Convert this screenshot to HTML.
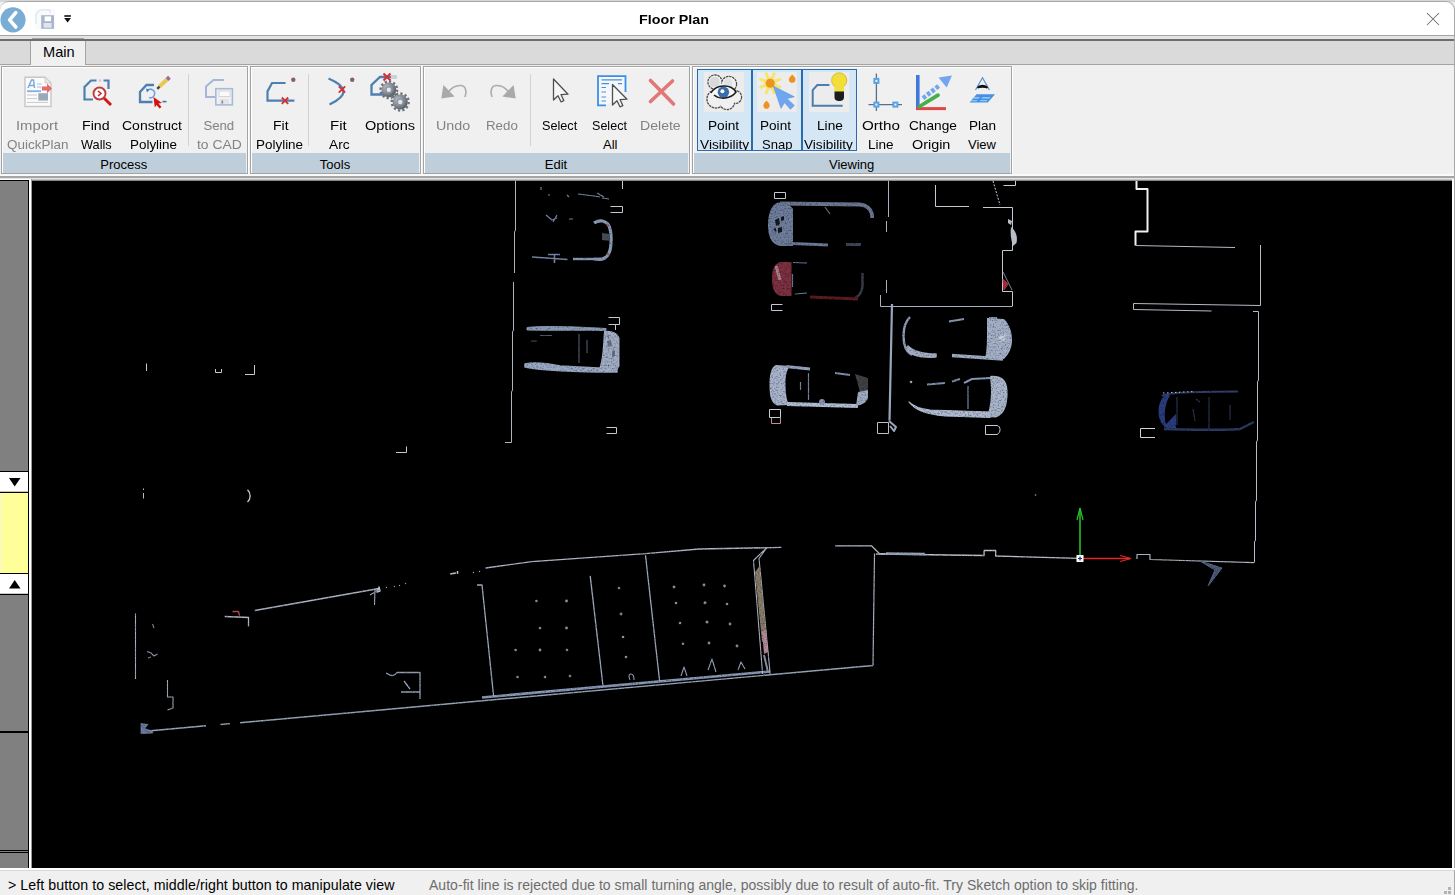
<!DOCTYPE html>
<html><head><meta charset="utf-8"><style>
*{box-sizing:border-box}
html,body{margin:0;padding:0;width:1455px;height:895px;overflow:hidden;background:#f0f0f0;font-family:"Liberation Sans",sans-serif;font-size:13px;color:#000}
.a{position:absolute}
.t{position:absolute;white-space:nowrap;line-height:1;font-size:13px;transform-origin:0 0}
.dis{color:#838383}
.grp{position:absolute;top:66px;height:108px;border:1px solid #a3a3a3;background:#f0f0f0;box-shadow:inset 1px 1px 0 #fff}
.grp:after{content:"";position:absolute;right:-2px;top:-1px;bottom:-2px;width:1px;background:#fff}
.lbar{position:absolute;left:1px;right:1px;bottom:0;height:20px;background:#bfcedb}
.c{width:100px;text-align:center}
.sep{position:absolute;top:74px;width:1px;height:72px;background:#d0d0d0}
</style></head><body>
<!-- window top border -->
<div class="a" style="left:0;top:0;width:1455px;height:2px;background:#d6d6d6"></div>
<div class="a" style="left:0;top:1px;width:1455px;height:35px;background:#fff;border-top:1px solid #a8a8a8;border-right:1px solid #a8a8a8;border-radius:9px 9px 0 0"></div>
<div class="a" style="left:0;top:35px;width:1455px;height:1px;background:#a5a5a5"></div>
<div class="a" style="left:0;top:36px;width:1455px;height:3px;background:#e3e3e3"></div>
<div class="a" style="left:0;top:39px;width:1455px;height:2px;background:#6e6e6e"></div>
<div class="a" style="left:32px;top:38px;width:52px;height:1px;background:#a0a0a0"></div>
<!-- tab strip -->
<div class="a" style="left:0;top:41px;width:1455px;height:23px;background:#dadada"></div>
<div class="a" style="left:0;top:64px;width:1455px;height:1px;background:#a3a3a3"></div>
<div class="a" style="left:30px;top:41px;width:56px;height:24px;background:#f0f0f0;border-left:1px solid #a3a3a3;border-right:1px solid #a3a3a3"></div>
<div class="t" style="left:43px;top:44.5px;font-size:14.6px">Main</div>
<div class="a" style="left:0;top:65px;width:1455px;height:110px;background:#f0f0f0"></div>

<!-- title -->
<div class="t" style="left:639.2px;top:13px;font-weight:bold;font-size:13.7px;transform:scaleX(1.045)">Floor Plan</div>

<!-- ribbon groups -->
<div class="grp" style="left:1px;width:247px"><div class="lbar"></div></div>
<div class="grp" style="left:250px;width:171px"><div class="lbar"></div></div>
<div class="grp" style="left:423px;width:267px"><div class="lbar"></div></div>
<div class="grp" style="left:692px;width:320px"><div class="lbar"></div></div>

<!-- RIBBON -->
<svg class="a" style="left:0;top:0" width="1455" height="180" viewBox="0 0 1455 180">
<!-- title bar icons -->
<circle cx="13" cy="19.8" r="12.6" fill="#79add3"/>
<path d="M15.8,12.6 L9.6,19.8 L15.8,27" fill="none" stroke="#fff" stroke-width="3.6" stroke-linecap="round" stroke-linejoin="round"/>
<path d="M36,24 V14 L40.5,9.8 H50 V13" fill="none" stroke="#c9d3e8" stroke-width="1.3"/>
<rect x="35" y="9" width="20" height="20" fill="#f4f6fa" opacity="0.5"/>
<rect x="41.2" y="15.2" width="12.8" height="13.6" fill="#a9b5cd"/>
<rect x="44.6" y="16.4" width="6.4" height="4.8" fill="#fff"/>
<rect x="43.6" y="23" width="8" height="4.6" fill="#dfe4ee"/>
<rect x="64.3" y="15.2" width="6.6" height="1.6" fill="#111"/>
<path d="M64.2,18 H71 L67.6,22.6 Z" fill="#111"/>
<!-- Close X -->
<path d="M1427,13 L1439,25 M1439,13 L1427,25" stroke="#6c6c6c" stroke-width="1.05"/>

<!-- Import QuickPlan -->
<path d="M25,77.2 H45 L51,83 V106.5 H25 Z" fill="#fbfbfb" stroke="#c6c6c6" stroke-width="1.4"/>
<path d="M45,77.5 V83 H50.5" fill="#e8e8e8" stroke="#cfcfcf" stroke-width="1"/>
<path d="M28,88 L31.5,80 H33.5 L34.5,88 M29.3,85.5 H34" fill="none" stroke="#7ea9db" stroke-width="1.5"/>
<path d="M37,84 H41.5 M37,87 H41.5" stroke="#9cc0e6" stroke-width="1"/>
<rect x="27" y="90.3" width="14" height="1.8" fill="#85b0dd"/>
<path d="M27,95 H37 M27,98.6 H37 M27,102.4 H48" stroke="#c9c9c9" stroke-width="1"/>
<rect x="38.3" y="93.2" width="9.7" height="7.4" fill="#9aaabb"/>
<path d="M42,86.5 H47 V83.6 L52,88.4 L47,93.2 V90.5 H42 Z" fill="#e56a6a"/>

<!-- Find Walls -->
<path d="M96.5,80.5 H91 L84.5,87 V99.5 H93 M103.5,80.5 H108.5 V89" fill="none" stroke="#4b80b1" stroke-width="2.2"/>
<circle cx="100" cy="80.6" r="1.3" fill="#dcc0e8"/>
<circle cx="99.5" cy="93.5" r="6" fill="#fafafa" stroke="#c23a3a" stroke-width="1.9"/>
<path d="M104.2,98.3 L111,105" stroke="#d41616" stroke-width="3"/>
<path d="M98,91 L101,93.5 L98,96" fill="none" stroke="#c82222" stroke-width="1.5"/>

<!-- Construct Polyline -->
<path d="M154,85 H146.5 L140,92 V102 H152.5" fill="none" stroke="#4b80b1" stroke-width="2.3"/>
<path d="M147.5,90.5 A4.2,4.2 0 1 1 149,97.5" fill="none" stroke="#6aa6e8" stroke-width="1.6"/>
<path d="M146,88.5 L149.5,89.5 L147,92.5 Z" fill="#3a78d0"/>
<path d="M153.5,97 L162,103 L158.5,103.6 L161.5,107 L159.6,108.4 L156.5,105 L154.8,107.5 Z" fill="#d61010"/>
<path d="M162.5,101.6 H166.5" stroke="#4a70a0" stroke-width="1.6"/>
<path d="M159.5,86.5 L167,79.5" stroke="#e8c850" stroke-width="4"/>
<path d="M157.3,88.8 L159.5,86.5" stroke="#444" stroke-width="2.5"/>
<path d="M167,79.5 L169.5,77.3" stroke="#9a6a9a" stroke-width="4"/>

<!-- Send to CAD -->
<path d="M224,80 H213.5 L206,86.5 V97 H216" fill="none" stroke="#a4b7d9" stroke-width="2"/>
<rect x="215.8" y="88.7" width="16.6" height="16.2" fill="#eef0f4" stroke="#a9b9d8" stroke-width="1.6"/>
<rect x="219" y="91" width="11" height="5.5" fill="#fafafa" stroke="#cfcfcf" stroke-width="0.8"/>
<rect x="220" y="99" width="9" height="5" fill="#e4e4e4"/>
<rect x="221.5" y="100.5" width="1.6" height="3" fill="#888"/>

<!-- separator Process -->
<rect x="188" y="74" width="1" height="72" fill="#d2d2d2"/>

<!-- Fit Polyline -->
<path d="M285.6,83 H272 L267.5,91.4 V100.7 H294.4" fill="none" stroke="#4b80b1" stroke-width="2.2"/>
<path d="M281.8,97.5 L288.2,103.9 M288.2,97.5 L281.8,103.9" stroke="#d23434" stroke-width="1.9"/>
<circle cx="293.3" cy="79.7" r="2.2" fill="#8a5c72"/>
<rect x="308" y="74" width="1" height="72" fill="#d2d2d2"/>

<!-- Fit Arc -->
<path d="M328.5,78.5 Q358,91 329.5,104.5" fill="none" stroke="#4b80b1" stroke-width="2.2"/>
<path d="M338.8,86.3 L345.2,92.7 M345.2,86.3 L338.8,92.7" stroke="#d23434" stroke-width="1.9"/>
<circle cx="352.2" cy="79.8" r="2.2" fill="#8a5c72"/>

<!-- Options -->
<path d="M396.5,77 H380 L371.5,85 V94.5 H386" fill="none" stroke="#4b80b1" stroke-width="2.3"/>
<rect x="391" y="75.5" width="6" height="3" fill="#cfcfcf"/>
<defs><radialGradient id="gg" cx="0.35" cy="0.35" r="0.75"><stop offset="0" stop-color="#b8bec6"/><stop offset="0.6" stop-color="#7a828c"/><stop offset="1" stop-color="#4c545e"/></radialGradient></defs>
<g fill="url(#gg)"><circle cx="388.8" cy="89.8" r="7.4"/><circle cx="400.2" cy="102" r="7.6"/></g>
<g fill="none" stroke="#6a727c" stroke-width="2.4"><circle cx="388.8" cy="89.8" r="8.3" stroke-dasharray="2.17 2.17"/><circle cx="400.2" cy="102" r="8.5" stroke-dasharray="2.22 2.22"/></g>
<circle cx="388.8" cy="89.8" r="3.6" fill="#8e959e"/><circle cx="388.8" cy="89.8" r="2.2" fill="#e4e6e8"/>
<circle cx="400.2" cy="102" r="3.6" fill="#8e959e"/><circle cx="400.2" cy="102" r="2.2" fill="#e4e6e8"/>
<path d="M383.5,73.5 L390.5,80.5 M390.5,73.5 L383.5,80.5" stroke="#d23030" stroke-width="2"/>

<!-- Undo / Redo -->
<path d="M443.4,85 L441.3,98.6 L454.6,96.4 Z" fill="#a9a9a9"/>
<path d="M448.5,92 C452,87 457,85.2 461,85.5 C466,86 467,92 465,97" fill="none" stroke="#ababab" stroke-width="1.6"/>
<path d="M513.6,85 L515.7,98.6 L502.4,96.4 Z" fill="#a9a9a9"/>
<path d="M508.5,92 C505,87 500,85.2 496,85.5 C491,86 490,92 492,97" fill="none" stroke="#ababab" stroke-width="1.6"/>
<rect x="530" y="74" width="1" height="72" fill="#d2d2d2"/>

<!-- Select -->
<path d="M553.5,79 V100 L558,95.8 L561,101.8 L563.8,100.6 L561,94.6 L568,94.2 Z" fill="#f7f7f7" stroke="#505050" stroke-width="1.3" stroke-linejoin="round"/>
<!-- Select All -->
<path d="M606,105.3 H598 V76.2 H625.5 V92" fill="#f4f8fc" stroke="#3a8fe3" stroke-width="1.8"/>
<path d="M601.5,79.8 H622 M601.5,83.6 H609 M618,83.6 H622 M601.5,87.5 H606 M601.5,92 H606 M601.5,97 H606 M601.5,101 H606" stroke="#4a90d8" stroke-width="1.2"/>
<path d="M612.5,84.5 V105 L617,100.8 L620,106.8 L622.8,105.6 L620,99.6 L627,99.2 Z" fill="#f7f7f7" stroke="#505050" stroke-width="1.3" stroke-linejoin="round"/>
<!-- Delete -->
<path d="M650.5,80.5 L673.5,104 M672.5,81 L650.5,101.5" stroke="#e27777" stroke-width="3.6" stroke-linecap="round"/>

<!-- Viewing checked buttons -->
<rect x="697.5" y="69.5" width="54" height="81" fill="#d5e6f5" stroke="#2a6aad" stroke-width="1"/>
<rect x="752.5" y="69.5" width="49" height="81" fill="#d5e6f5" stroke="#2a6aad" stroke-width="1"/>
<rect x="802.5" y="69.5" width="54" height="81" fill="#d5e6f5" stroke="#2a6aad" stroke-width="1"/>
<path d="M698,70.5 H751 M753,70.5 H801 M803,70.5 H856" stroke="#c2ecfa" stroke-width="1"/>
<rect x="704" y="72" width="40" height="40" fill="#ececec"/>
<rect x="757" y="72" width="40" height="40" fill="#ececec"/>
<rect x="809" y="72" width="40" height="40" fill="#ececec"/>
<!-- Point visibility icon -->
<g fill="#f0f0f0" stroke="#4e4e4e" stroke-width="1.4" stroke-dasharray="2.5 0.7">
<circle cx="715" cy="82" r="7"/><circle cx="729" cy="84" r="7.5"/><circle cx="735" cy="97" r="6.5"/><circle cx="716" cy="99" r="9"/><circle cx="727" cy="102" r="7.5"/>
</g>
<g fill="#f0f0f0"><circle cx="715" cy="82" r="6.3"/><circle cx="729" cy="84" r="6.8"/><circle cx="735" cy="97" r="5.8"/><circle cx="716" cy="99" r="8.3"/><circle cx="727" cy="102" r="6.8"/><circle cx="724" cy="92" r="9"/></g>
<circle cx="714.5" cy="82" r="5.2" fill="#d8d9da"/><circle cx="728" cy="83" r="4.5" fill="#e0e1e2"/>
<path d="M711,93 C716,84 731,83.5 736,92 C732,98 725,100 714,96" fill="#f6f8fa" stroke="none"/>
<circle cx="723.4" cy="92.2" r="5.7" fill="#3a6db0"/>
<circle cx="722.4" cy="91.2" r="2" fill="#fff"/>
<path d="M711,93 C716,84 731,83.5 736,92 C731,99 720,100 714,95" fill="none" stroke="#1c1c1c" stroke-width="1.5"/>
<!-- Point snap icon -->
<path d="M775.3,85.4 L779.7,87.2 M772.3,88.4 L774.1,92.8 M768.1,88.4 L766.3,92.8 M765.1,85.4 L760.7,87.2 M765.1,81.2 L760.7,79.4 M768.1,78.2 L766.3,73.8 M772.3,78.2 L774.1,73.8 M775.3,81.2 L779.7,79.4" stroke="#f7e46a" stroke-width="3" stroke-linecap="round"/>
<circle cx="770.2" cy="83.3" r="6" fill="#f7e46a"/>
<circle cx="770.2" cy="83.3" r="4.5" fill="#ec9322"/>
<path d="M773.4,86.2 L794.3,96.8 L786.8,98.6 L794.3,105.4 L790.4,109.3 L784.5,102.6 L781,108.3 Z" fill="#6ea6f2" stroke="#5a90d8" stroke-width="0.6"/>
<path d="M792.2,74.5 C795,77 795.8,78.5 795.5,80 C795.2,82 793.8,82.8 792.2,82.8 C790.6,82.8 789,82 788.9,80 C788.8,78.5 789.6,77 792.2,74.5 Z" fill="#ec9322"/>
<path d="M766.5,100.8 C769,103 769.8,104.5 769.6,106 C769.3,108 767.9,108.8 766.5,108.8 C765,108.8 763.6,108 763.4,106 C763.3,104.5 764,103 766.5,100.8 Z" fill="#ec9322"/>
<!-- Line visibility icon -->
<path d="M829.4,85 H817.3 L812.7,90.2 V105.8 H842.7" fill="none" stroke="#4b7db0" stroke-width="2"/>
<circle cx="839.2" cy="80.4" r="7.6" fill="#f2de38" stroke="#d8b020" stroke-width="0.8"/>
<rect x="834.5" y="86" width="9.5" height="6" fill="#f2de38"/>
<path d="M834.5,91.5 H844 V97 C844,100 842,101 839.2,101 C836.5,101 834.5,100 834.5,97 Z" fill="#1c1c1c"/>
<!-- Ortho Line -->
<path d="M876.4,73.5 V111 M868.5,104.6 H902" stroke="#56718c" stroke-width="1.3"/>
<g fill="#5aa2e2"><rect x="873.4" y="77.9" width="6" height="6"/><rect x="873.4" y="101.6" width="6" height="6"/><rect x="892.4" y="101.6" width="6" height="6"/></g>
<g fill="#eaf4fc"><rect x="875.4" y="79.9" width="2" height="2"/><rect x="875.4" y="103.6" width="2" height="2"/><rect x="894.4" y="103.6" width="2" height="2"/></g>
<!-- Change origin -->
<path d="M917.8,75 V108.5" stroke="#3f78dc" stroke-width="3.6"/>
<path d="M916,108.6 H946" stroke="#e04848" stroke-width="3"/>
<path d="M919.5,106.5 L938,95.2" stroke="#46b046" stroke-width="3.8" stroke-linecap="round"/>
<path d="M923,98.2 L940,85" stroke="#72a6ee" stroke-width="4.6" stroke-dasharray="3.6 1.8"/>
<path d="M938.5,77.5 L952,75.5 L946.7,87.6 Z" fill="#72a6ee"/>
<!-- Plan view -->
<path d="M975.5,90 L982.5,77.8 L989.4,90" fill="none" stroke="#5a90d8" stroke-width="1.2"/>
<path d="M977.5,87.8 C979.5,84.8 985.5,84.8 987.5,87.8 C985.5,86.6 979.5,86.6 977.5,87.8 Z" fill="#111" stroke="#111" stroke-width="1.6"/>
<path d="M969.6,102.5 L976.5,94.2 H995 L987.8,102.5 Z" fill="#4a8ee6"/>
<path d="M973.5,97.2 H979.8 L978.5,98.6 H972.4 Z M982.5,97.2 H990.5 L989.3,98.6 H981.3 Z M971.5,100.2 H977.5 L976.6,101.3 H970.7 Z M980.6,100.2 H987.6 L986.7,101.3 H979.7 Z" fill="#9fdcf8"/>
</svg>
<div class="t dis" style="left:16.36px;top:119px;transform:scaleX(1.142)">Import</div>
<div class="t dis" style="left:7.46px;top:138px;transform:scaleX(1.036)">QuickPlan</div>
<div class="t" style="left:82.31px;top:119px;transform:scaleX(1.091)">Find</div>
<div class="t" style="left:80.60px;top:138px;transform:scaleX(0.981)">Walls</div>
<div class="t" style="left:122.32px;top:119px;transform:scaleX(1.078)">Construct</div>
<div class="t" style="left:129.57px;top:138px;transform:scaleX(1.032)">Polyline</div>
<div class="t dis" style="left:203.50px;top:119px;transform:scaleX(1.000)">Send</div>
<div class="t dis" style="left:196.80px;top:138px;transform:scaleX(1.068)">to CAD</div>
<div class="t" style="left:272.52px;top:119px;transform:scaleX(1.077)">Fit</div>
<div class="t" style="left:256.47px;top:138px;transform:scaleX(1.034)">Polyline</div>
<div class="t" style="left:329.85px;top:119px;transform:scaleX(1.154)">Fit</div>
<div class="t" style="left:329.00px;top:138px;transform:scaleX(1.053)">Arc</div>
<div class="t" style="left:365.38px;top:119px;transform:scaleX(1.116)">Options</div>
<div class="t dis" style="left:435.70px;top:119px;transform:scaleX(1.100)">Undo</div>
<div class="t dis" style="left:485.88px;top:119px;transform:scaleX(1.023)">Redo</div>
<div class="t" style="left:542.43px;top:119px;transform:scaleX(0.974)">Select</div>
<div class="t" style="left:592.43px;top:119px;transform:scaleX(0.966)">Select</div>
<div class="t" style="left:603.00px;top:138px;transform:scaleX(1.000)">All</div>
<div class="t dis" style="left:639.92px;top:119px;transform:scaleX(1.083)">Delete</div>
<div class="t" style="left:708.45px;top:119px;transform:scaleX(1.052)">Point</div>
<div class="t" style="left:760.26px;top:119px;transform:scaleX(1.045)">Point</div>
<div class="t" style="left:816.55px;top:119px;transform:scaleX(1.052)">Line</div>
<div class="t" style="left:862.13px;top:119px;transform:scaleX(1.168)">Ortho</div>
<div class="t" style="left:868.46px;top:138px;transform:scaleX(1.043)">Line</div>
<div class="t" style="left:908.55px;top:119px;transform:scaleX(1.050)">Change</div>
<div class="t" style="left:912.39px;top:138px;transform:scaleX(1.106)">Origin</div>
<div class="t" style="left:968.96px;top:119px;transform:scaleX(1.042)">Plan</div>
<div class="t" style="left:968.00px;top:138px;transform:scaleX(1.000)">View</div>
<div class="t c" style="left:73.8px;top:158px">Process</div>
<div class="t c" style="left:285px;top:158px">Tools</div>
<div class="t c" style="left:506px;top:158px">Edit</div>
<div class="t c" style="left:801.7px;top:158px">Viewing</div>
<div class="a" style="left:697px;top:130px;width:160px;height:20px;overflow:hidden"><div class="t" style="left:2.50px;top:8px;transform:scaleX(1.053)">Visibility</div><div class="t" style="left:64.50px;top:8px;transform:scaleX(1.003)">Snap</div><div class="t" style="left:107.40px;top:8px;transform:scaleX(1.047)">Visibility</div></div>
<!-- /RIBBON -->
<!-- lower ribbon border -->
<div class="a" style="left:0;top:174px;width:1455px;height:2px;background:#fafafa"></div>
<div class="a" style="left:0;top:176px;width:1455px;height:2px;background:#a6a6a6"></div>
<div class="a" style="left:0;top:178px;width:1455px;height:1px;background:#e4e4e4"></div>

<!-- left strip -->
<div class="a" style="left:0;top:179px;width:31px;height:691px;background:#fff"></div>
<div class="a" style="left:0;top:180px;width:29px;height:689px;background:#000"></div>
<div class="a" style="left:0;top:181px;width:28px;height:687px;background:#808080"></div>

<!-- left strip scroll -->
<div class="a" style="left:0;top:471px;width:28px;height:1px;background:#000"></div>
<div class="a" style="left:0;top:472px;width:28px;height:20px;background:#fff;border-bottom:1px solid #c8c0b0"></div>
<div class="a" style="left:0;top:492px;width:28px;height:1px;background:#000"></div>
<div class="a" style="left:0;top:493px;width:28px;height:80px;background:#ffff99;box-shadow:inset 1px 0 0 #f6f6e0"></div>
<div class="a" style="left:0;top:573px;width:28px;height:1px;background:#000"></div>
<div class="a" style="left:0;top:574px;width:28px;height:20px;background:#fff;border-bottom:1px solid #c8c8c8"></div>
<div class="a" style="left:0;top:594px;width:28px;height:1px;background:#000"></div>
<div class="a" style="left:0;top:731px;width:28px;height:2px;background:#000"></div>
<div class="a" style="left:0;top:850px;width:28px;height:1px;background:#000"></div>
<div class="a" style="left:0;top:852px;width:28px;height:1px;background:#000"></div>
<svg class="a" style="left:0;top:470px" width="28" height="130"><path d="M9,8 H20.5 L14.7,16.5 Z" fill="#000"/><path d="M9,118.5 H20.5 L14.7,110 Z" fill="#000"/></svg>

<!-- canvas -->
<div class="a" style="left:31px;top:179px;width:1424px;height:2px;background:linear-gradient(#e4e4e4,#6a6a6a)"></div>
<div class="a" style="left:31px;top:179px;width:1px;height:689px;background:#9a9a9a"></div>
<div class="a" style="left:32px;top:181px;width:1420px;height:687px;background:#000"></div>
<div class="a" style="left:1452px;top:179px;width:2px;height:691px;background:#fff"></div>
<div class="a" style="left:1454px;top:36px;width:1px;height:859px;background:#a8a8a8"></div>

<!-- PLAN -->
<svg class="a" style="left:0;top:0" width="1455" height="895" viewBox="0 0 1455 895">
<defs><clipPath id="cv"><rect x="32" y="181" width="1420" height="687"/></clipPath>
<filter id="nz" x="0" y="0" width="1455" height="895" filterUnits="userSpaceOnUse"><feTurbulence type="fractalNoise" baseFrequency="0.6" numOctaves="2" seed="7" result="n"/><feColorMatrix in="n" type="matrix" values="1.7 0 0 0 0.05  1.7 0 0 0 0.05  1.7 0 0 0 0.05  0 0 0 0 1" result="m"/><feComposite in="SourceGraphic" in2="m" operator="arithmetic" k1="1" k2="0" k3="0" k4="0"/></filter>
</defs>
<g clip-path="url(#cv)" fill="none" stroke-linejoin="round" stroke-linecap="butt">
<!-- ===== crisp walls ===== -->
<g stroke-width="1">
<path d="M515.5,181 V230 L514.5,232 V273 M513.5,282 V330 L512.5,332 V390 L511.5,392 V442.5 H505" stroke="#aeb3bc"/>
<path d="M622.5,181 V189 M610.5,206.5 H622.5 V212.5 H610.5" stroke="#c4c8d0"/>
<path d="M608.5,317.5 H619.5 V324.5 H608.5 M615.5,325 V330 M606.5,427.5 H616.5 V433.5 H606.5" stroke="#c4c8d0"/>
<path d="M774.5,192.5 H785.5 V198.5 H774.5 Z M782.5,304.5 H771.5 V310.5 H782.5" stroke="#c4c8d2"/>
<path d="M769.5,409.5 H780.5 V417.5 H769.5 Z" stroke="#c8ccd4"/>
<path d="M771.5,418 V423.5 H780.5 V418" stroke="#c88a9a"/>
<path d="M888.5,181 V217 M886.5,221 V232 M886.5,280 V293 M880.5,295 V306.5 H1012.5" stroke="#a8b0be"/>
<path d="M935.5,185 V206.5 H969 M983,207.5 H1012.5 V250.5 H1002.5 V291.5 H1012.5 V306" stroke="#c4c8d0"/>
<path d="M1003.5,185.5 H1015.5 V181" stroke="#c8ccd4"/>
<path d="M1136.5,181 V189 H1147.5 V231.5 H1135.5 V245.5" stroke="#f0f0f0" stroke-width="2"/>
<path d="M1135.5,245.5 L1235,247.5 M1260.5,245 V305.5 L1133.5,303.5 V309.5 L1211.5,311 M1253,311.5 H1258.5 V380 L1257.5,382 V440 L1256.5,442 V500 L1255.5,502 V540 L1254.5,542 V562.5" stroke="#b4bac6"/>
<path d="M1140.5,428.5 H1155 M1140.5,428.5 V437.5 H1155" stroke="#d0d4dc"/>
<path d="M877.5,422.5 H888.5 V433.5 H877.5 Z" stroke="#b8c0cc"/>
<path d="M985.5,425.5 H997 C1001,426 1001,433 997,434.5 H985.5 Z" stroke="#c4c8d0"/>
<path d="M146.5,363.5 V371 M215.5,369 V372.5 H221.5 V369 M245,374.5 H254.5 V365 M396,452.5 H406.5 V446.5" stroke="#c4cad4"/>
<path d="M143.5,488.5 V490 M143.5,493 V498.5" stroke="#b4bac6"/>
</g>
<path d="M993,181 L1000,205" stroke="#c8ccd4" stroke-width="1" stroke-dasharray="2 1.5"/>
<path d="M892,304 L889.5,420.5" stroke="#98a6bc" stroke-width="2.2"/>
<path d="M889,421 L896,427 L894,431 L890,426" stroke="#9aa6bc" stroke-width="2"/>
<path d="M1011,227 C1016,231 1018,237 1016.5,243 L1013,246 C1011,240 1010,233 1011,227 Z M1008,219 L1012,221 L1011,225 L1008,223 Z" fill="#b8bec8" stroke="none"/>
<path d="M1003,279 L1008,284 L1004,290 Z" fill="#a02838" stroke="#b03040" stroke-width="1"/>
<path d="M1003,272 L1012,290" stroke="#a0a8b8" stroke-width="0.8"/>
<path d="M247.5,489.8 C251,493 251,499 247.5,502" stroke="#c4cad6" stroke-width="1.3"/>

<!-- ===== point-cloud objects (noisy) ===== -->
<g filter="url(#nz)">
<!-- car A -->
<path d="M594,223 C600,219 606,221 608.5,225 C612,231 612,248 608.5,254 C606,259 600,260 594,259" stroke="#8c9cb8" stroke-width="3.2"/>
<path d="M602,233 L610,234 L610,241 L602,240 Z" fill="#4a4e58" stroke="none"/>
<path d="M573,259 L600,259" stroke="#8898b4" stroke-width="2.4"/>
<path d="M532,257 L567.5,259.5 M548,254.5 L560,254.5 M554.5,254 V263" stroke="#7888a8" stroke-width="1.6"/>
<path d="M546,215 L552,220 L557,218 M553,222 L557,215" stroke="#7c8aa6" stroke-width="1.2"/>
<path d="M578,194 L594,196 L600,197 M597,193 L604,197 M602,198 L609,199 M541,187 V190 M548,195 H550 M567,195 L569,197 M569,219 H573" stroke="#7a88a4" stroke-width="1.2"/>
<path d="M606,224 L609,226 M607,253 L609,255" stroke="#b04050" stroke-width="1.5"/>
<!-- car B -->
<path d="M527,327.5 C545,325.5 580,327 606,328.5 L606,330.5 C580,330 545,330.5 527,330 Z" fill="#8c9cb8" stroke="#8c9cb8" stroke-width="1"/>
<path d="M525,364 C535,362 545,363 560,366 L617,369 L617,372 C590,372 545,371 525,367 Z" fill="#9aaac4" stroke="#9aaac4" stroke-width="1.5"/>
<path d="M604,331 C612,330 618,333 619.5,338 V366 C618,371 612,372.5 598,371 C603,362 603,342 604,331 Z" fill="#a2aec6" stroke="none"/>
<path d="M607,341 L611,340 L612,346 L608,347 Z M612,351 L615,350 L615,356 L612,357 Z M606,336 L609,335 L609,338 Z" fill="#6a7284" stroke="none"/>
<path d="M579,334 V363 M587,340 V353 M540,335.5 H552 M531,341 H537" stroke="#505a6c" stroke-width="1.2"/>
<!-- car C -->
<path d="M778,202.5 C771,205 768,214 768,225 C768,236 771,244 780,246 L793,246 C793,235 793,215 793,209 L788,203 Z" fill="#6e7e9c" stroke="none"/>
<path d="M775,220 L779,218 L780,224 L776,226 Z M778,228 L782,227 L782,232 L778,233 Z M781,217 L784,216 L784,220 L781,221 Z M773,229 L776,228 L776,232 Z" fill="#151820" stroke="none"/>
<path d="M780,203.5 L860,204.5 C866,205 871,209 872,214 V218" stroke="#6c7890" stroke-width="3.8"/>
<path d="M781,243 L828,245" stroke="#6c7a96" stroke-width="3"/>
<path d="M846,244.5 L861,244.5" stroke="#3e4656" stroke-width="3"/>
<path d="M825,207 L830,214" stroke="#6c7890" stroke-width="1.2"/>
<!-- car D -->
<path d="M780,262 C774,264 772,270 772,279 C772,289 775,295 781,296 L791.5,296 V262 Z" fill="#7c3040" stroke="none"/>
<path d="M776,266 L780,280" stroke="#b08090" stroke-width="3"/>
<path d="M793,262.5 L807,263 M792.5,274 V287 M795,294 L807,293" stroke="#6c7ca0" stroke-width="1.2"/>
<path d="M862.5,273 V286 C862,292 859,296 855,298" stroke="#3a3c44" stroke-width="2.5"/>
<path d="M810,297 L858,299" stroke="#5c1c24" stroke-width="3"/>
<!-- car E -->
<path d="M776,365 C771,367 769.5,375 769.5,385 C769.5,396 771,403 777,405.5 L789,405 C786,398 785.5,390 785.5,385 C785.5,377 786,371 790,366 Z" fill="#a8b4cc" stroke="none"/>
<path d="M786,366.5 L810,369" stroke="#98a6c2" stroke-width="3"/>
<path d="M787,404 L858,406" stroke="#b4c0d6" stroke-width="4"/>
<path d="M855,374 L868,378 V392 L860,392 Z" fill="#404246" stroke="none"/>
<path d="M858,392 L868,390 V398 C866,403 862,405 856,406 Z" fill="#a0acc4" stroke="none"/>
<path d="M835,373 L850,375" stroke="#8090b0" stroke-width="2"/>
<path d="M808.5,373 V400 M800.5,382 V390" stroke="#7484a0" stroke-width="1.2"/>
<circle cx="822" cy="402" r="3" fill="#8a96b0" stroke="none"/>
<!-- car F -->
<path d="M1162,396 C1166,392 1200,391.5 1238,391.5" stroke="#34406a" stroke-width="2.2"/>
<path d="M1164,429 C1190,430 1230,430 1240,429 L1254,422" stroke="#2e3a64" stroke-width="2.4"/>
<path d="M1168,393 C1161,397 1158.5,405 1158.5,411 C1158.5,420 1162,426 1168,429 L1176,428 L1176,414 L1166,424 C1164,418 1164,404 1170,396 Z" fill="#2a3c7e" stroke="none"/>
<path d="M1163,393 L1195,391.5" stroke="#c0c8d8" stroke-width="1" stroke-dasharray="1.5 2.5"/>
<path d="M1177,397 V425 M1193,409 L1195,421 M1209,397 V430 M1230,405 V420 M1196,399 L1200,402" stroke="#2a3250" stroke-width="1.2"/>
<!-- car G -->
<path d="M910,317 C905,322 903.5,328 903.5,336 C903.5,346 906,352 912,355" stroke="#8e9cb6" stroke-width="2.4"/>
<path d="M906,349 C910,355 918,358 936,357 L936,354 C922,354 914,352 908,346 Z" fill="#a4b0c6" stroke="#a4b0c6" stroke-width="1.5"/>
<path d="M952,355.5 L1003,359" stroke="#a0acc4" stroke-width="3.5"/>
<path d="M987,318 L1004,319 C1010,325 1012,333 1012,340 C1012,348 1009,354 1004,359 L985,359 C987,350 987,340 987,330 Z" fill="#a4b0c8" stroke="none"/>
<path d="M999,337 L1006,334 L1005,341 L1000,342 Z" fill="#c4cedc" stroke="none"/>
<path d="M949,321.5 L964,319 M989,318 L997,318" stroke="#8a98b4" stroke-width="2"/>
<!-- car H -->
<path d="M909,402 C915,410 925,414 945,416 L990,417.5 L990,412 L930,410 C920,409 913,406 909,402 Z" fill="#b0bcd2" stroke="#b0bcd2" stroke-width="1.2"/>
<path d="M990,376 C1000,375 1007,379 1007.5,390 C1008,402 1006,414 996,417.5 L987,417 C991,405 992,390 990,378 Z" fill="#aab6cc" stroke="none"/>
<path d="M964,383 L972,379 L990,378" stroke="#8898b8" stroke-width="2"/>
<path d="M968,386 V409" stroke="#7080a0" stroke-width="1.3"/>
<path d="M927,384.5 L945,383 M952,381.5 L960,379" stroke="#8090b0" stroke-width="2"/>
<circle cx="911" cy="382" r="1.3" fill="#a0acc4" stroke="none"/>

<!-- lower block lines -->
<path d="M142.5,731.5 L206,725.8 M220.5,724.5 L230,723.6 M240,722.7 L873,665.5" stroke="#9aa6bc" stroke-width="1.4"/>
<path d="M482,697.5 L770,671.5" stroke="#8a9ab8" stroke-width="2.6"/>
<path d="M873,665.5 L874.5,553.5" stroke="#aab4c4" stroke-width="1.2"/>
<path d="M141,723.5 L148,724.5 L144.5,728.5 L152,731 L153,733 L141,733.5 Z" fill="#6a7aa0" stroke="#7888aa" stroke-width="0.8"/>
<path d="M135.5,613.5 V679" stroke="#a4aec0" stroke-width="1.1"/>
<path d="M167.5,680 V697 L173,697 V708 L167.5,710" stroke="#a0aabc" stroke-width="1.1"/>
<path d="M152.5,624 L154,628 M147,651.5 L151,653 L154,656 L157.5,654 M148,658 L151,657" stroke="#8c96a8" stroke-width="1.1"/>
<path d="M224.7,616.5 L249,617.5 M248.5,617 V626.5 M254.8,610.5 L379,588.5 M485.5,568 L531.7,561.6 L645.5,553.7 L699.2,549 L781.4,547.4" stroke="#b0b8c8" stroke-width="1.3"/>
<path d="M379,587 L380,591 L377,592 Z M450,574 L456,573 M457.5,571 V574" stroke="#c0c6d2" stroke-width="1.5"/>
<g fill="#9aa4b8" stroke="none"><circle cx="386.5" cy="587.5" r="0.7"/><circle cx="394.5" cy="586.5" r="0.7"/><circle cx="399.5" cy="585.5" r="0.7"/><circle cx="405.5" cy="583.5" r="0.7"/><circle cx="473.5" cy="572.5" r="0.7"/><circle cx="479.5" cy="571.5" r="0.7"/></g>
<path d="M232.5,611.5 H238.5 L239.5,616" stroke="#b04848" stroke-width="1.3"/>
<path d="M375,589 L374.5,605 M370,595 L375,592 L378,590" stroke="#a0aabc" stroke-width="1.1"/>
<path d="M386,673 C391,676 394,677 397,672.5 H420 V699 M401,692 H420 M404,681 L410,689" stroke="#98a2b8" stroke-width="1.3"/>
<path d="M477,585 H482 L493.7,697 M590.2,575.8 L603,686 M645.5,555.3 L659.7,681.8" stroke="#a2acc0" stroke-width="1.3"/>
<path d="M767,547.4 L753.5,560.5 L762.6,674 M767,547.4 L759,558.5 L770.2,674" stroke="#b0b6c6" stroke-width="1.1"/>
<path d="M755,572 L759.5,566 L767,640 L762,642 Z" fill="#8a7c6a" stroke="none"/>
<path d="M762,632 L766,630 L768,652 L764,654 Z" fill="#b88a9a" stroke="none"/><path d="M764,655 L768,672" stroke="#8a94a8" stroke-width="2"/>
<path d="M835.2,545.8 H871.5 L879.5,553.7 H900" stroke="#b8c0cc" stroke-width="1.2"/>
<g fill="#8a94a8" stroke="none">
<circle cx="536.4" cy="601" r="1.3"/><circle cx="566.5" cy="601" r="1.4"/><circle cx="540" cy="628" r="1.3"/><circle cx="566.5" cy="628" r="1.4"/><circle cx="515.6" cy="650" r="1.3"/><circle cx="540" cy="650" r="1.4"/><circle cx="567" cy="650" r="1.3"/><circle cx="517.5" cy="677" r="1.3"/><circle cx="545" cy="677" r="1.3"/><circle cx="570" cy="676" r="1.3"/>
<circle cx="619" cy="588" r="1.3"/><circle cx="621" cy="614" r="1.4"/><circle cx="623" cy="637" r="1.3"/><circle cx="626" cy="657" r="1.3"/>
<circle cx="674" cy="587" r="1.4"/><circle cx="704" cy="585" r="1.4"/><circle cx="724.5" cy="586" r="1.4"/><circle cx="676" cy="603" r="1.3"/><circle cx="705" cy="602.7" r="1.5"/><circle cx="727" cy="604" r="1.3"/><circle cx="680" cy="623" r="1.3"/><circle cx="707" cy="622" r="1.5"/><circle cx="730" cy="624" r="1.4"/><circle cx="683" cy="643.8" r="1.3"/><circle cx="709" cy="643" r="1.4"/><circle cx="737" cy="646" r="1.4"/>
</g>
<path d="M630,680 C626,672 635,672 634,680 M681,676 L684,667 L687,676 M708,670 L712,659 L716,672 M738,670 L741,662 L745,669" stroke="#98a2b8" stroke-width="1.1"/>
<!-- right lower lines -->
<path d="M875.9,554 L984.1,555.5 V550.5 H995.7 V556 L1079.4,558.4" stroke="#c0c6d0" stroke-width="1.3"/>
<path d="M886,553.5 L925,554" stroke="#98a4bc" stroke-width="2.4"/>
<path d="M1137,559 V554.5 H1150 V559.5 L1254,562.7" stroke="#b4bcc8" stroke-width="1.2"/>
<path d="M1200,561 L1222,568 L1208,586 L1215,570 Z" fill="#4c5a78" stroke="#5c6a8a" stroke-width="1"/>
</g>
<!-- origin axes -->
<path d="M1080,556 V510" stroke="#28c828" stroke-width="1.5"/>
<path d="M1080,508 L1077,520 M1080,508 L1083,520" stroke="#28c828" stroke-width="1.2"/>
<path d="M1083,558.5 H1130" stroke="#e02a2a" stroke-width="1.6"/>
<path d="M1131,558.5 L1120,555.5 M1131,558.5 L1120,561.5" stroke="#e02a2a" stroke-width="1.2"/>
<rect x="1076.5" y="555" width="7" height="7" fill="#fff" stroke="none"/>
<path d="M1080,556.5 V560.5 M1078,558.5 H1082" stroke="#1a2a6a" stroke-width="1.2"/>
<circle cx="1035.5" cy="495" r="0.8" fill="#9aa0b0" stroke="none"/>
</g>
</svg>

<!-- /PLAN -->
<!-- status -->
<div class="a" style="left:0;top:868px;width:1455px;height:2px;background:#fff"></div>
<div class="a" style="left:0;top:870px;width:1454px;height:1px;background:#d8d8d8"></div>
<div class="t" style="left:8px;top:878px;font-size:14.2px;letter-spacing:0.07px">&gt; Left button to select, middle/right button to manipulate view</div>
<div class="t" style="left:429px;top:878px;font-size:14px;letter-spacing:0.036px;color:#6d6d6d">Auto-fit line is rejected due to small turning angle, possibly due to result of auto-fit. Try Sketch option to skip fitting.</div>

<div class="a" style="left:1448px;top:887px;width:3px;height:3px;background:#b4b4b4"></div><div class="a" style="left:1444px;top:891px;width:3px;height:3px;background:#b4b4b4"></div><div class="a" style="left:1448px;top:891px;width:3px;height:3px;background:#b4b4b4"></div>
</body></html>
